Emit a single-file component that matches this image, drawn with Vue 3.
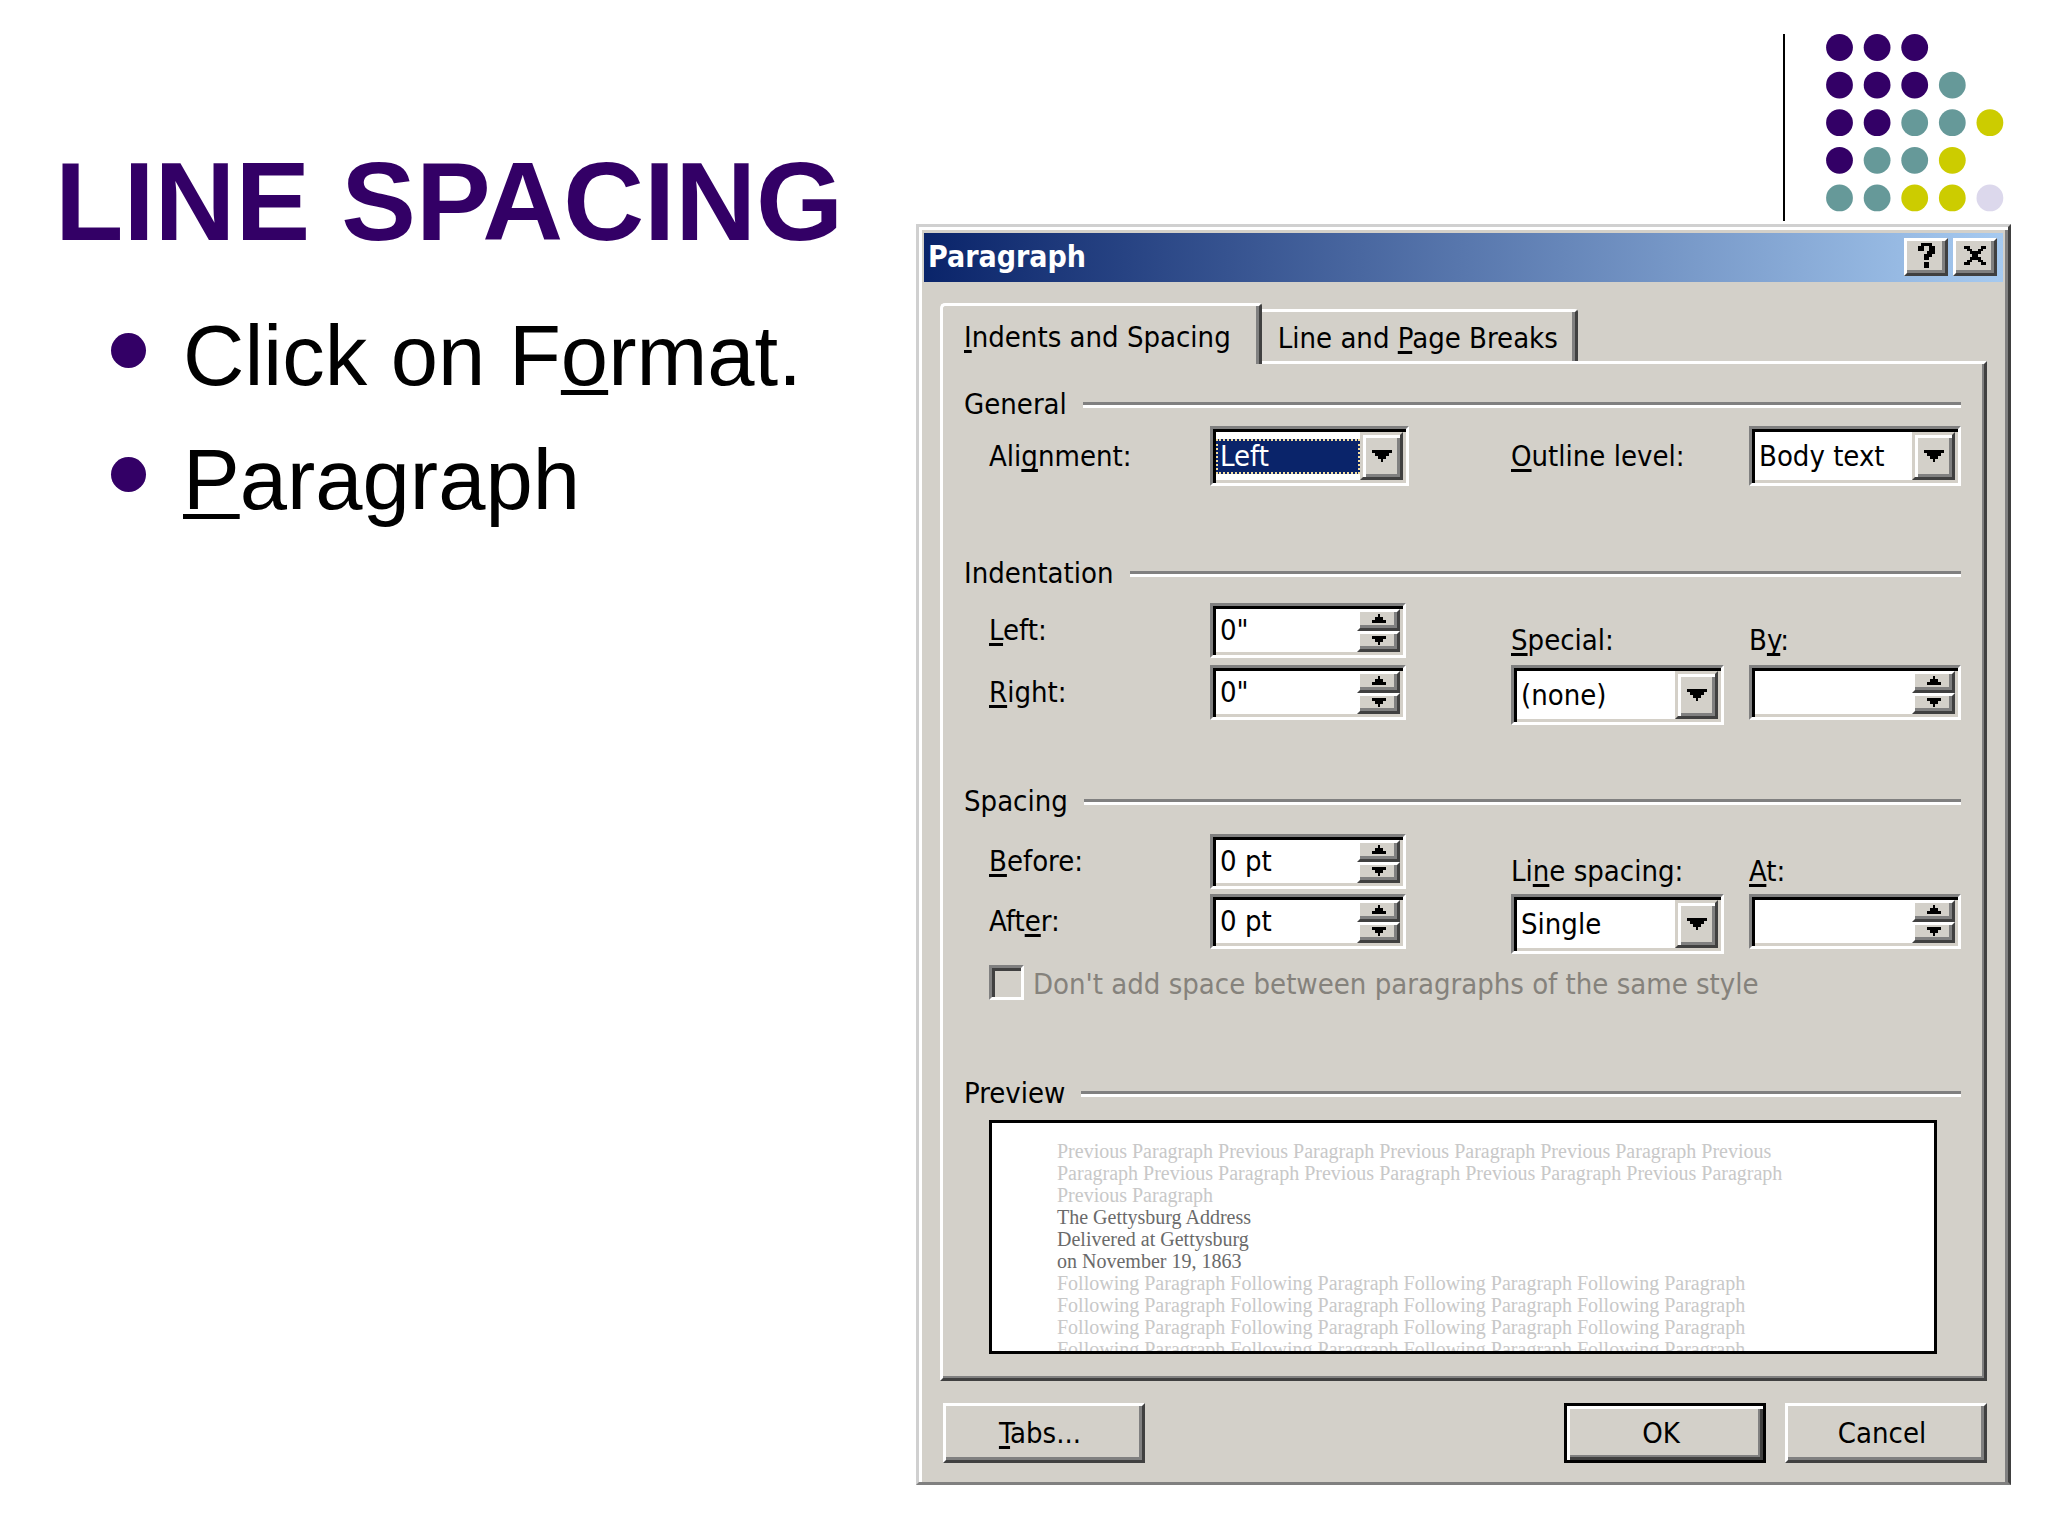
<script setup>
import { reactive } from 'vue'

const palette = { p: '#330066', t: '#669999', y: '#cccc00', l: '#dcd8ec' }
const dotRows = ['ppp', 'pppt', 'pptty', 'ptty', 'ttyyl']
const dots = dotRows.flatMap((row, r) =>
  [...row]
    .map((c, i) => ({ cx: 13.5 + i * 37.6, cy: 13.5 + r * 37.6, fill: palette[c] }))
)

const drop = 'M0 0h7v1h-1v1h-1v1h-1v1h-1v-1h-1v-1h-1v-1h-1z'
const steps = [
  { name: 'Increase', d: 'M2 0h1v1h1v1h1v1h-5v-1h1v-1h1z' },
  { name: 'Decrease', d: 'M0 0h5v1h-1v1h-1v1h-1v-1h-1v-1h-1z' },
]

/* label parts: text before the access key, the key, text after it */
const groups = [
  {
    id: 'indentation',
    title: 'Indentation',
    spins: [
      { id: 'left', label: ['', 'L', 'eft:'] },
      { id: 'right', label: ['', 'R', 'ight:'] },
    ],
    combo: { id: 'special', label: ['', 'S', 'pecial:'], option: '(none)' },
    amount: { id: 'by', label: ['B', 'y', ':'] },
  },
  {
    id: 'spacing',
    title: 'Spacing',
    spins: [
      { id: 'before', label: ['', 'B', 'efore:'] },
      { id: 'after', label: ['Aft', 'e', 'r:'] },
    ],
    combo: { id: 'rule', label: ['Li', 'n', 'e spacing:'], option: 'Single' },
    amount: { id: 'at', label: ['', 'A', 't:'] },
  },
]

const values = reactive({
  alignment: 'Left',
  outline: 'Body text',
  left: '0"',
  right: '0"',
  special: '(none)',
  by: '',
  before: '0 pt',
  after: '0 pt',
  rule: 'Single',
  at: '',
})

const previous = [
  'Previous Paragraph Previous Paragraph Previous Paragraph Previous Paragraph Previous',
  'Paragraph Previous Paragraph Previous Paragraph Previous Paragraph Previous Paragraph',
  'Previous Paragraph',
]
const current = ['The Gettysburg Address', 'Delivered at Gettysburg', 'on November 19, 1863']
const following = Array(4).fill(
  'Following Paragraph Following Paragraph Following Paragraph Following Paragraph'
)
</script>

<template>
  <main class="slide">
    <section class="notes">
      <h1>LINE SPACING</h1>
      <ul>
        <li><span>Click on F<u>o</u>rmat.</span></li>
        <li><span><u>P</u>aragraph</span></li>
      </ul>
    </section>

    <section class="side">
      <div class="ornament">
        <svg width="178" height="178" viewBox="0 0 178 178" aria-hidden="true">
          <circle v-for="(d, i) in dots" :key="i" :cx="d.cx" :cy="d.cy" r="13.4" :fill="d.fill" />
        </svg>
      </div>

      <form class="dialog" @submit.prevent>
        <header class="titlebar">
          <h2>Paragraph</h2>
          <button type="button" class="cap" aria-label="Help">
            <svg width="17" height="25" viewBox="0 0 6 9" preserveAspectRatio="none" shape-rendering="crispEdges">
              <path d="M1 0h4v1h1v3h-1v1h-1v1h-2v-2h1v-1h1v-2h-2v2h-2v-2h1zM2 7h2v2h-2z" />
            </svg>
          </button>
          <button type="button" class="cap" aria-label="Close">
            <svg width="22" height="19" viewBox="0 0 8 7" preserveAspectRatio="none" shape-rendering="crispEdges">
              <path d="M0 0h2v1h1v1h2v-1h1v-1h2v1h-1v1h-1v1h-1v1h1v1h1v1h1v1h-2v-1h-1v-1h-2v1h-1v1h-2v-1h1v-1h1v-1h1v-1h-1v-1h-1v-1h-1z" />
            </svg>
          </button>
        </header>

        <div class="body">
          <nav class="tabs" role="tablist">
            <button type="button" class="tab active" role="tab" aria-selected="true"><span><u>I</u>ndents and Spacing</span></button>
            <button type="button" class="tab" role="tab" aria-selected="false"><span>Line and <u>P</u>age Breaks</span></button>
          </nav>

          <div class="panel">
            <section class="general">
              <h3>General</h3>
              <div class="fields">
                <div class="pair">
                  <label for="alignment">Ali<u>g</u>nment:</label>
                  <div class="box combo chosen">
                    <select id="alignment" v-model="values.alignment"><option>Left</option></select>
                    <span class="drop"><svg width="20" height="12" viewBox="0 0 7 4" preserveAspectRatio="none" shape-rendering="crispEdges"><path :d="drop" /></svg></span>
                  </div>
                </div>
                <label class="wide" for="outline"><u>O</u>utline level:</label>
                <div class="box combo">
                  <select id="outline" v-model="values.outline"><option>Body text</option></select>
                  <span class="drop"><svg width="20" height="12" viewBox="0 0 7 4" preserveAspectRatio="none" shape-rendering="crispEdges"><path :d="drop" /></svg></span>
                </div>
              </div>
            </section>

            <section v-for="g in groups" :key="g.id" :class="g.id">
              <h3>{{ g.title }}</h3>
              <div class="fields">
                <div class="stack">
                  <div v-for="s in g.spins" :key="s.id" class="pair">
                    <label :for="s.id">{{ s.label[0] }}<u>{{ s.label[1] }}</u>{{ s.label[2] }}</label>
                    <div class="box spin">
                      <input :id="s.id" v-model="values[s.id]" type="text" />
                      <span class="arrows">
                        <button v-for="a in steps" :key="a.name" type="button" :aria-label="`${a.name} ${s.id}`">
                          <svg width="14" height="9" viewBox="0 0 5 3" preserveAspectRatio="none" shape-rendering="crispEdges"><path :d="a.d" /></svg>
                        </button>
                      </span>
                    </div>
                  </div>
                </div>
                <div class="stack lowered">
                  <label :for="g.combo.id">{{ g.combo.label[0] }}<u>{{ g.combo.label[1] }}</u>{{ g.combo.label[2] }}</label>
                  <div class="box combo">
                    <select :id="g.combo.id" v-model="values[g.combo.id]"><option>{{ g.combo.option }}</option></select>
                    <span class="drop"><svg width="20" height="12" viewBox="0 0 7 4" preserveAspectRatio="none" shape-rendering="crispEdges"><path :d="drop" /></svg></span>
                  </div>
                </div>
                <div class="stack lowered">
                  <label :for="g.amount.id">{{ g.amount.label[0] }}<u>{{ g.amount.label[1] }}</u>{{ g.amount.label[2] }}</label>
                  <div class="box spin">
                    <input :id="g.amount.id" v-model="values[g.amount.id]" type="text" />
                    <span class="arrows">
                      <button v-for="a in steps" :key="a.name" type="button" :aria-label="`${a.name} ${g.amount.id}`">
                        <svg width="14" height="9" viewBox="0 0 5 3" preserveAspectRatio="none" shape-rendering="crispEdges"><path :d="a.d" /></svg>
                      </button>
                    </span>
                  </div>
                </div>
              </div>
            </section>

            <div class="check">
              <input id="same" type="checkbox" disabled />
              <label for="same">Don't add space between paragraphs of the same style</label>
            </div>

            <section class="preview">
              <h3>Preview</h3>
              <div class="sheet">
                <p v-for="(t, i) in previous" :key="'p' + i">{{ t }}</p>
                <p v-for="(t, i) in current" :key="'c' + i" class="current">{{ t }}</p>
                <p v-for="(t, i) in following" :key="'f' + i">{{ t }}</p>
              </div>
            </section>
          </div>
        </div>

        <footer class="actions">
          <button type="button" class="push"><span><u>T</u>abs...</span></button>
          <button type="submit" class="push default">OK</button>
          <button type="button" class="push">Cancel</button>
        </footer>
      </form>
    </section>
  </main>
</template>

<style>
body {
  margin: 0;
  background: #fff;
}
</style>

<style scoped>
.slide {
  --face: #d3d0c9;
  --shade: #808080;
  --dark: #404040;
  display: grid;
  grid-template-columns: minmax(0, 916fr) minmax(0, 1095fr) minmax(0, 37fr);
  font-family: "Liberation Sans", Arial, sans-serif;
  color: #000;
}
.slide *,
.slide *::before,
.slide *::after {
  box-sizing: border-box;
}
h1,
h2,
h3,
p,
ul {
  margin: 0;
  padding: 0;
}
u {
  text-decoration: underline;
  text-decoration-thickness: 3px;
  text-underline-offset: 3px;
  text-decoration-skip-ink: none;
}

/* slide text */
.notes {
  padding: 146px 0 0 55px;
  white-space: nowrap;
}
h1 {
  font-size: 112px;
  line-height: 112px;
  color: #330066;
}
ul {
  list-style: none;
  margin: 36px 0 0 56px;
}
li {
  display: flex;
  align-items: center;
  gap: 37px;
  font-size: 85px;
  line-height: 124px;
}
li::before {
  content: "";
  width: 35px;
  height: 35px;
  margin-bottom: 12px;
  border-radius: 50%;
  background: #330066;
}
li u {
  text-decoration-thickness: 5px;
  text-underline-offset: 5px;
}

.side {
  padding-top: 34px;
}
.ornament {
  width: fit-content;
  height: 187px;
  margin: 0 7px 3px auto;
  padding-left: 41px;
  border-left: 2px solid #000;
}
.ornament svg {
  display: block;
}

/* dialog frame */
.dialog {
  padding: 6px 5px 19px;
  background: var(--face);
  border: 3px solid;
  border-color: #d0d0d0 var(--dark) var(--shade) #d0d0d0;
  box-shadow: inset 3px 3px #fff, inset -3px 0 var(--shade);
  font-family: "DejaVu Sans Condensed", Tahoma, sans-serif;
  font-size: 29px;
  line-height: 35px;
}
button,
input,
select {
  font: inherit;
  color: inherit;
  margin: 0;
  padding: 0;
  border: 0;
  border-radius: 0;
  appearance: none;
}
.titlebar {
  display: flex;
  align-items: center;
  gap: 5px;
  height: 49px;
  padding: 0 6px 2px 4px;
  background: linear-gradient(90deg, #0a246a, #a6caf0);
}
.titlebar h2 {
  flex: 1;
  font-size: 30px;
  line-height: 35px;
  font-weight: bold;
  color: #fff;
}
.cap {
  display: grid;
  place-items: center;
  width: 44px;
  height: 38px;
  padding-bottom: 2px;
  background: var(--face);
  border: 3px solid;
  border-color: #fff var(--dark) var(--dark) #fff;
  box-shadow: inset -3px -3px var(--shade);
}
.body {
  margin: 21px 16px 0;
}

/* tabs */
.tabs {
  display: flex;
  align-items: flex-end;
}
.tab {
  height: 52px;
  padding: 4px 17px 0 16px;
  background: var(--face);
  border-top: 3px solid #fff;
  border-right: 3px solid var(--dark);
  border-top-right-radius: 3px;
  box-shadow: inset -3px 0 var(--shade);
}
.tab.active {
  position: relative;
  height: 61px;
  margin-bottom: -3px;
  padding: 4px 28px 0 21px;
  border-left: 3px solid #fff;
  border-top-left-radius: 5px;
}
.panel {
  padding: 23px 23px 24px 21px;
  border: 3px solid;
  border-color: #fff var(--dark) var(--dark) #fff;
  box-shadow: inset -2px -2px var(--shade);
}

/* groups */
h3 {
  display: flex;
  align-items: center;
  gap: 16px;
  font-size: 29px;
  font-weight: normal;
  line-height: 35px;
}
h3::after {
  content: "";
  flex: 1;
  height: 6px;
  border-top: 3px solid var(--shade);
  border-bottom: 3px solid #fff;
}
.fields {
  display: grid;
  grid-template-columns: 420px minmax(0, 1fr) 213px 25px 212px;
  align-items: start;
  margin-left: 25px;
}
.fields > :nth-child(2) {
  grid-column: 3;
}
.fields > :nth-child(3) {
  grid-column: 5;
}
.wide {
  align-self: center;
}
.pair {
  display: grid;
  grid-template-columns: 221px minmax(0, 1fr);
  align-items: center;
}
.pair .spin {
  margin-right: 3px;
}
.stack {
  display: flex;
  flex-direction: column;
}
.lowered {
  padding-top: 20px;
}
.general .fields {
  margin-top: 4px;
}
.indentation {
  margin-top: 70px;
}
.indentation .fields {
  margin-top: 12px;
}
.indentation .stack {
  gap: 7px;
}
.spacing {
  margin-top: 59px;
}
.spacing .fields {
  margin-top: 15px;
}
.spacing .stack {
  gap: 5px;
}
.preview {
  margin-top: 76px;
}

/* sunken controls */
.box {
  display: flex;
  align-items: center;
  padding: 3px;
  background: #fff;
  border: 3px solid;
  border-color: var(--shade) #fff #fff var(--shade);
  box-shadow: inset 3px 3px #000, inset -3px -3px #d4d0c8;
}
.combo {
  height: 60px;
}
.spin {
  height: 55px;
}
.box select,
.box input {
  flex: 1;
  min-width: 0;
  height: 35px;
  padding-left: 4px;
  background: transparent;
  outline: 0;
}
.box.chosen select {
  padding-left: 2px;
  background: #0a246a;
  border: 2px dotted #f5dfa0;
  line-height: 31px;
  color: #fff;
}
.drop {
  display: grid;
  place-items: center;
  align-self: stretch;
  width: 43px;
  background: var(--face);
  border: 3px solid;
  border-color: #d4d0c8 var(--dark) var(--dark) #d4d0c8;
  box-shadow: inset 3px 3px #fff, inset -3px -3px var(--shade);
  pointer-events: none;
}
.arrows {
  display: flex;
  flex-direction: column;
  align-self: stretch;
  width: 43px;
}
.arrows button {
  display: grid;
  place-items: center;
  flex: 1;
  padding-bottom: 2px;
  background: var(--face);
  border: 3px solid;
  border-color: #fff var(--dark) var(--dark) #fff;
  box-shadow: inset -3px -3px var(--shade);
}
.drop svg,
.arrows svg,
.cap svg {
  display: block;
}

.check {
  display: flex;
  align-items: center;
  gap: 9px;
  margin: 11px 0 0 25px;
  color: #85827c;
}
.check input {
  width: 35px;
  height: 35px;
  background: var(--face);
  border: 3px solid;
  border-color: var(--shade) #fff #fff var(--shade);
  box-shadow: inset 3px 3px var(--dark);
}
.check label {
  padding-top: 4px;
  line-height: 31px;
}

.sheet {
  height: 234px;
  margin: 9px 24px 0 25px;
  padding: 17px 0 0 65px;
  overflow: hidden;
  background: #fff;
  border: 3px solid #000;
  font-family: "Liberation Serif", "Times New Roman", serif;
  font-size: 20px;
  line-height: 22px;
  white-space: nowrap;
  color: #c8c8c8;
}
.sheet .current {
  color: #6a6a6a;
}

.actions {
  display: flex;
  gap: 19px;
  margin: 22px 16px 0 19px;
}
.push {
  width: 202px;
  height: 60px;
  padding-right: 8px;
  background: var(--face);
  border: 3px solid;
  border-color: #fff var(--dark) var(--dark) #fff;
  box-shadow: inset -3px -3px var(--shade);
}
.push:first-child {
  margin-right: auto;
}
.push.default {
  border-color: #000;
  box-shadow: inset 3px 3px #fff, inset -3px -3px var(--dark), inset -5px -5px var(--shade);
}
</style>
